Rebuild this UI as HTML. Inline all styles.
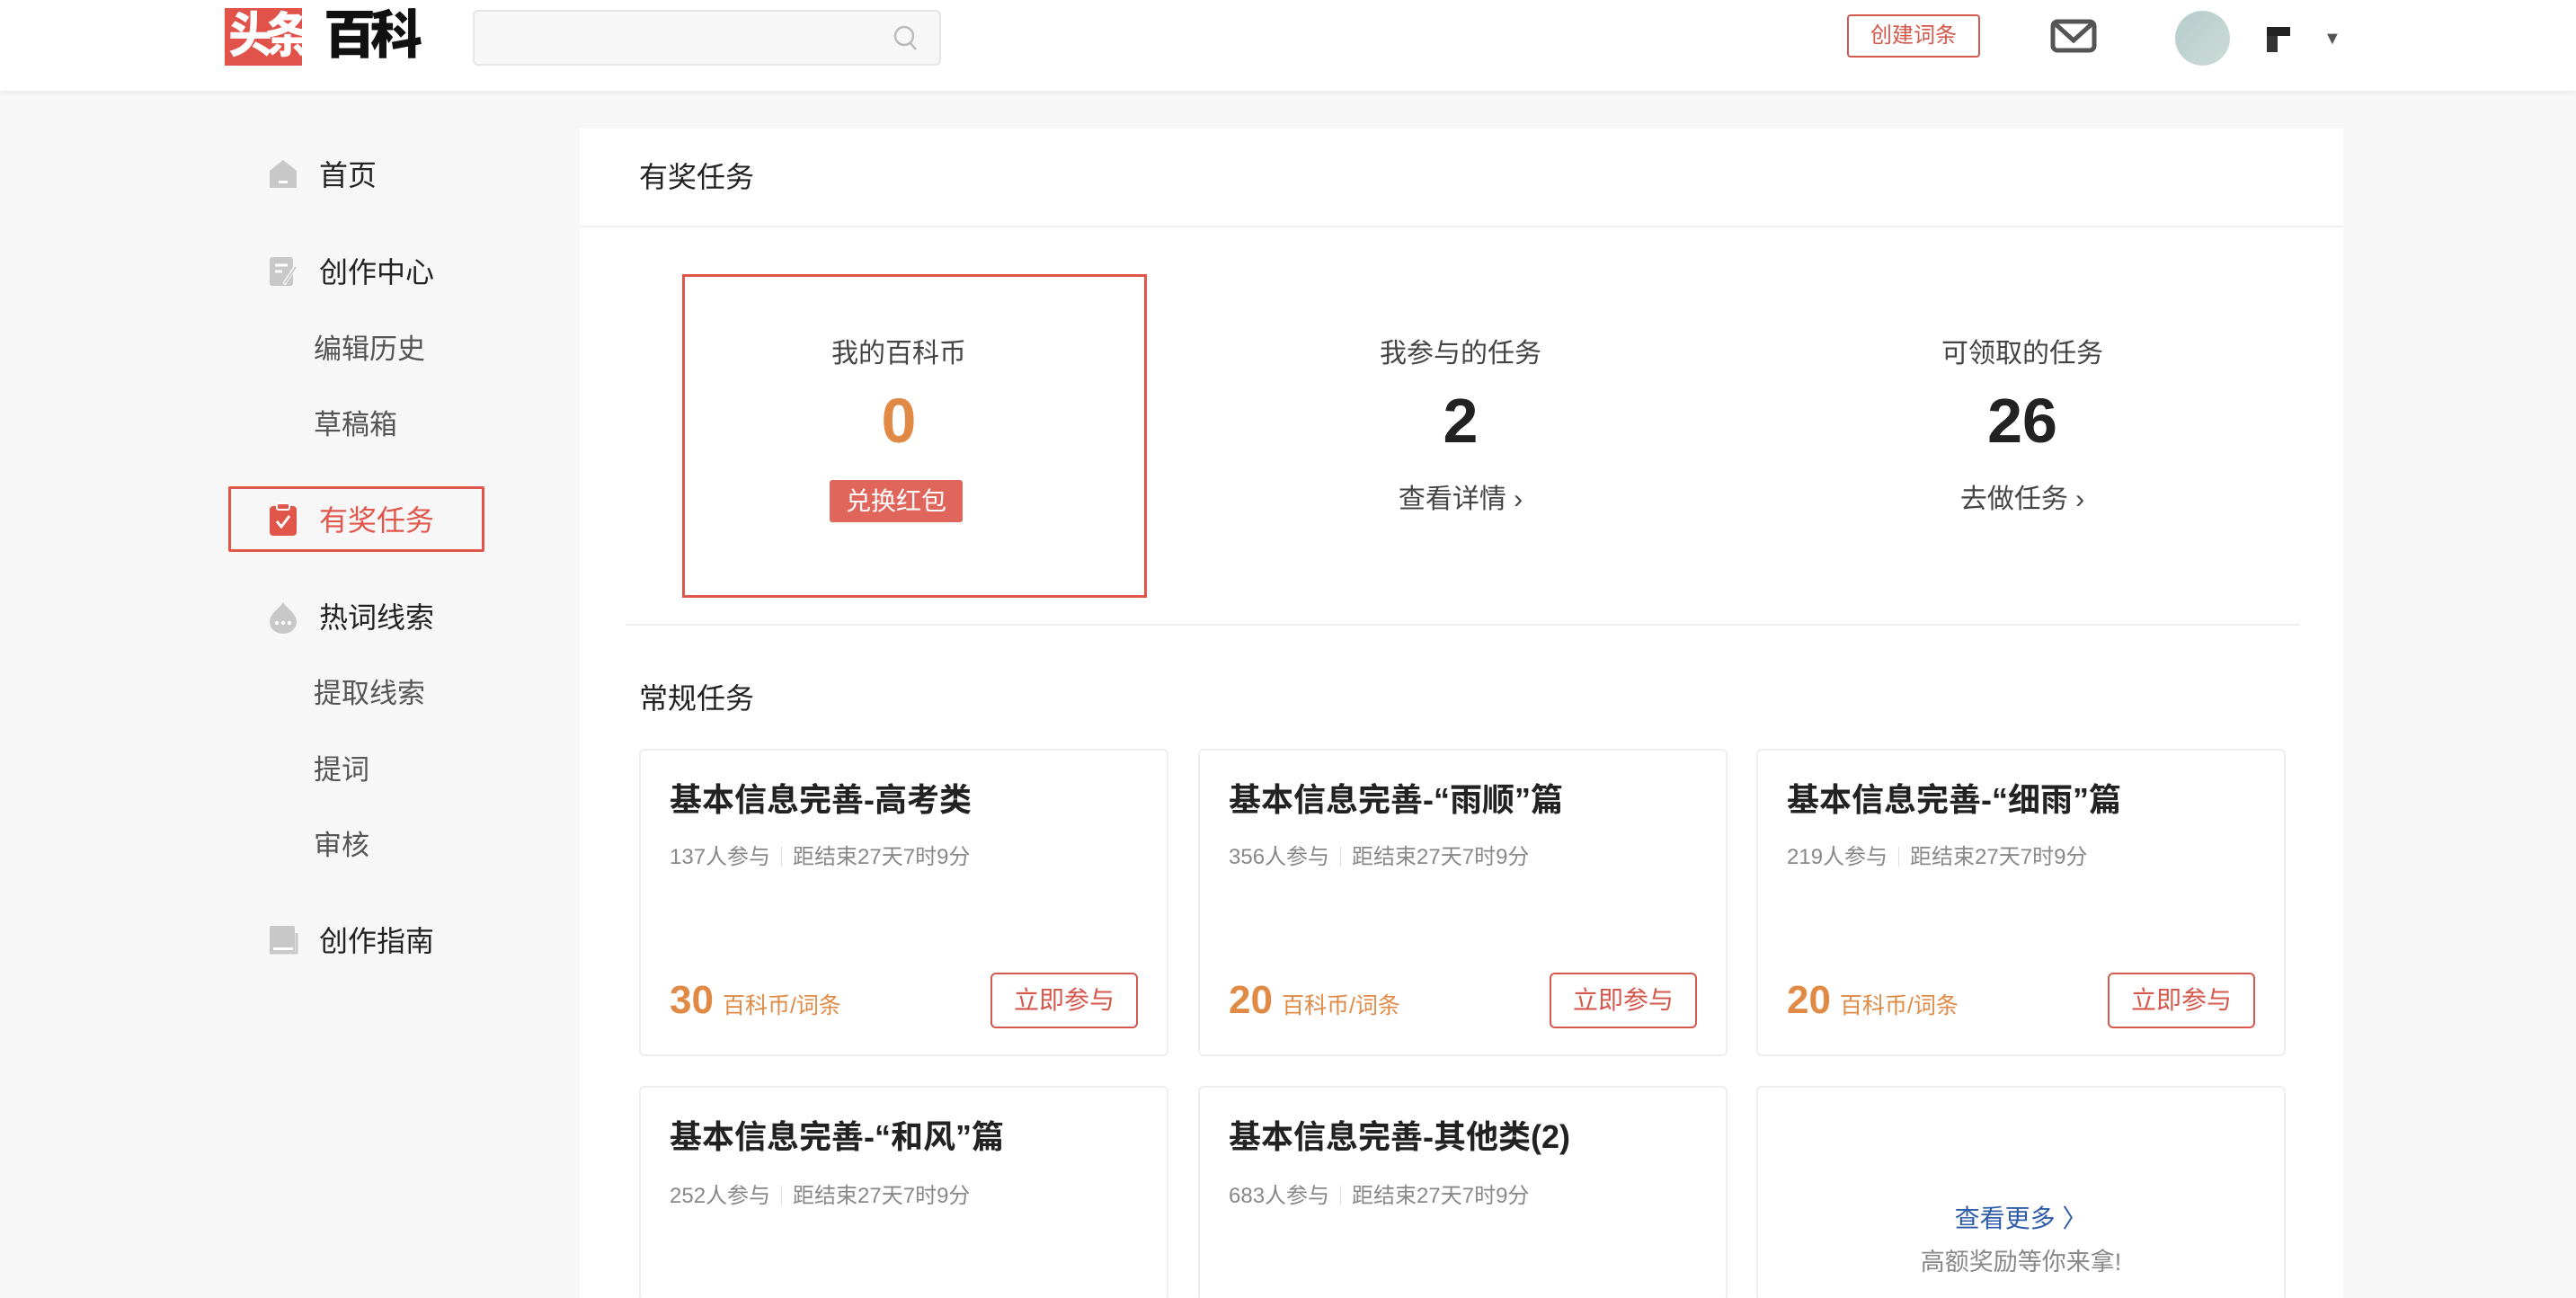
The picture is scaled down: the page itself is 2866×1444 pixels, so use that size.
<!DOCTYPE html>
<html><head><meta charset="utf-8">
<style>
*{margin:0;padding:0;box-sizing:border-box}
html{width:2866px;height:1444px;overflow:hidden}
body{width:2866px;height:1444px;overflow:hidden;background:#f7f7f7;font-family:"Liberation Sans","Noto Sans CJK SC",sans-serif;position:relative;color:#222}
.a{position:absolute;white-space:nowrap}
.hdr{left:0;top:0;width:2866px;height:101px;background:#fff;box-shadow:0 2px 6px rgba(0,0,0,.06)}
.side{font-size:32px;color:#222;line-height:40px}
.sub{font-size:31px;color:#555;line-height:40px}
.panel{left:645px;top:143px;width:1962px;height:1301px;background:#fff}
.lbl{font-size:30px;color:#444;text-align:center;width:500px;line-height:40px}
.num{font-size:70px;color:#222;text-align:center;width:500px;line-height:80px;font-weight:bold}
.lnk{font-size:30px;color:#444;text-align:center;width:500px;line-height:40px}
.card{width:589px;background:#fff;border:2px solid #eeeeee;border-radius:6px}
.ct{font-size:36px;font-weight:bold;color:#222;line-height:44px}
.cm{font-size:24px;color:#888;line-height:30px}
.cm i{display:inline-block;width:1px;height:22px;background:#ddd;margin:0 12px;vertical-align:-3px}
.pts{font-size:44px;font-weight:bold;color:#e08a45;line-height:50px}
.pts span{font-size:25px;font-weight:normal;margin-left:10px}
.btn{width:164px;height:62px;border:2px solid #d5584c;border-radius:6px;color:#d5584c;font-size:28px;text-align:center;line-height:58px}
</style></head><body>
<div class="a hdr"></div>
<div class="a" style="left:250px;top:9px;width:86px;height:64px;background:#e0524a"></div>
<div class="a" style="left:250px;top:6px;width:86px;text-align:center;font-size:54px;font-weight:900;color:#fff;line-height:68px;letter-spacing:-8px;transform:scaleX(0.9)">头条</div>
<div class="a" style="left:360px;top:6px;font-size:58px;font-weight:900;color:#111;line-height:68px;letter-spacing:-6px">百科</div>
<div class="a" style="left:526px;top:11px;width:521px;height:62px;background:#f7f7f7;border:2px solid #e6e6e6;border-radius:6px"></div>
<svg class="a" style="left:992px;top:26px" width="32" height="34" viewBox="0 0 32 34"><circle cx="14" cy="14" r="10" fill="none" stroke="#bbb" stroke-width="2.5"/><line x1="21" y1="22" x2="27" y2="29" stroke="#bbb" stroke-width="2.5"/></svg>
<div class="a" style="left:2055px;top:16px;width:148px;height:48px;border:2px solid #d5584c;border-radius:4px;color:#d5584c;font-size:24px;text-align:center;line-height:44px">创建词条</div>
<svg class="a" style="left:2281px;top:21px" width="52" height="38" viewBox="0 0 52 38"><rect x="3" y="3" width="46" height="32" rx="5" fill="none" stroke="#555" stroke-width="5"/><path d="M5 5 L26 24 L47 5" fill="none" stroke="#555" stroke-width="5"/></svg>
<div class="a" style="left:2420px;top:12px;width:61px;height:61px;border-radius:50%;background:linear-gradient(135deg,#b5cccc,#cddcd6)"></div>
<div class="a" style="left:2522px;top:34px;width:12px;height:24px;background:#333"></div>
<div class="a" style="left:2522px;top:30px;width:26px;height:10px;background:#222"></div>
<div class="a" style="left:2585px;top:32px;font-size:20px;color:#555">▼</div>
<div class="a" style="left:254px;top:541px;width:285px;height:73px;border:3px solid #e0564a;border-radius:2px"></div>
<svg class="a" style="left:298px;top:176px" width="34" height="36" viewBox="0 0 34 36"><path d="M17 2 L32 14 V33 H2 V14 Z" fill="#c8c8c8"/><rect x="12" y="25" width="10" height="3" fill="#fff"/></svg>
<div class="a side" style="left:355px;top:175px">首页</div>
<svg class="a" style="left:298px;top:284px" width="34" height="36" viewBox="0 0 34 36"><rect x="2" y="2" width="26" height="32" rx="3" fill="#c8c8c8"/><path d="M8 11h14M8 18h8" stroke="#fff" stroke-width="3"/><path d="M18 32 L30 14" stroke="#fff" stroke-width="4"/><path d="M19 31 L31 13" stroke="#c8c8c8" stroke-width="2"/></svg>
<div class="a side" style="left:355px;top:283px">创作中心</div>
<div class="a sub" style="left:349px;top:369px">编辑历史</div>
<div class="a sub" style="left:349px;top:453px">草稿箱</div>
<svg class="a" style="left:298px;top:559px" width="34" height="38" viewBox="0 0 34 38"><rect x="2" y="4" width="30" height="33" rx="4" fill="#e0564a"/><rect x="10" y="1" width="14" height="7" rx="2" fill="#e0564a" stroke="#fff" stroke-width="2"/><path d="M10 21 L15 27 L24 15" fill="none" stroke="#fff" stroke-width="3"/></svg>
<div class="a side" style="left:355px;top:559px;color:#e0564a">有奖任务</div>
<svg class="a" style="left:298px;top:668px" width="34" height="38" viewBox="0 0 34 38"><path d="M17 2 C20 8 32 14 32 24 A15 13 0 0 1 2 24 C2 14 14 8 17 2Z" fill="#c8c8c8"/><circle cx="10" cy="25" r="2.2" fill="#fff"/><circle cx="17" cy="25" r="2.2" fill="#fff"/><circle cx="24" cy="25" r="2.2" fill="#fff"/></svg>
<div class="a side" style="left:355px;top:667px">热词线索</div>
<div class="a sub" style="left:349px;top:752px">提取线索</div>
<div class="a sub" style="left:349px;top:837px">提词</div>
<div class="a sub" style="left:349px;top:921px">审核</div>
<svg class="a" style="left:298px;top:1028px" width="34" height="36" viewBox="0 0 34 36"><rect x="2" y="2" width="28" height="30" rx="2" fill="#c8c8c8"/><path d="M2 32 H32 V10" fill="none" stroke="#c8c8c8" stroke-width="3"/><rect x="6" y="26" width="22" height="3" fill="#fff"/></svg>
<div class="a side" style="left:355px;top:1027px">创作指南</div>
<div class="a panel"></div>
<div class="a" style="left:711px;top:177px;font-size:32px;color:#222;line-height:40px">有奖任务</div>
<div class="a" style="left:645px;top:251px;width:1962px;height:2px;background:#f0f0f0"></div>
<div class="a" style="left:759px;top:305px;width:517px;height:360px;border:3px solid #e0564a"></div>
<div class="a lbl" style="left:750px;top:374px">我的百科币</div>
<div class="a num" style="left:750px;top:428px;color:#e08a45">0</div>
<div class="a" style="left:923px;top:534px;width:148px;height:47px;background:#e0665c;border-radius:3px;color:#fff;font-size:28px;text-align:center;line-height:47px">兑换红包</div>
<div class="a lbl" style="left:1375px;top:374px">我参与的任务</div>
<div class="a num" style="left:1375px;top:428px">2</div>
<div class="a lnk" style="left:1375px;top:536px">查看详情 ›</div>
<div class="a lbl" style="left:2000px;top:374px">可领取的任务</div>
<div class="a num" style="left:2000px;top:428px">26</div>
<div class="a lnk" style="left:2000px;top:536px">去做任务 ›</div>
<div class="a" style="left:696px;top:694px;width:1863px;height:2px;background:#eeeeee"></div>
<div class="a" style="left:711px;top:757px;font-size:32px;color:#222;line-height:40px">常规任务</div>
<div class="a card" style="left:711px;top:833px;height:342px"></div>
<div class="a ct" style="left:745px;top:868px">基本信息完善-高考类</div>
<div class="a cm" style="left:745px;top:939px">137人参与<i></i>距结束27天7时9分</div>
<div class="a pts" style="left:745px;top:1088px">30<span>百科币/词条</span></div>
<div class="a btn" style="left:1102px;top:1082px">立即参与</div>
<div class="a card" style="left:1333px;top:833px;height:342px"></div>
<div class="a ct" style="left:1367px;top:868px">基本信息完善-“雨顺”篇</div>
<div class="a cm" style="left:1367px;top:939px">356人参与<i></i>距结束27天7时9分</div>
<div class="a pts" style="left:1367px;top:1088px">20<span>百科币/词条</span></div>
<div class="a btn" style="left:1724px;top:1082px">立即参与</div>
<div class="a card" style="left:1954px;top:833px;height:342px"></div>
<div class="a ct" style="left:1988px;top:868px">基本信息完善-“细雨”篇</div>
<div class="a cm" style="left:1988px;top:939px">219人参与<i></i>距结束27天7时9分</div>
<div class="a pts" style="left:1988px;top:1088px">20<span>百科币/词条</span></div>
<div class="a btn" style="left:2345px;top:1082px">立即参与</div>
<div class="a card" style="left:711px;top:1208px;height:240px"></div>
<div class="a ct" style="left:745px;top:1243px">基本信息完善-“和风”篇</div>
<div class="a cm" style="left:745px;top:1316px">252人参与<i></i>距结束27天7时9分</div>
<div class="a card" style="left:1333px;top:1208px;height:240px"></div>
<div class="a ct" style="left:1367px;top:1243px">基本信息完善-其他类(2)</div>
<div class="a cm" style="left:1367px;top:1316px">683人参与<i></i>距结束27天7时9分</div>
<div class="a card" style="left:1954px;top:1208px;height:240px"></div>
<div class="a" style="left:1954px;top:1337px;width:589px;text-align:center;font-size:28px;color:#2f5ca8;line-height:38px">查看更多 〉</div>
<div class="a" style="left:1954px;top:1385px;width:589px;text-align:center;font-size:27px;color:#888;line-height:38px">高额奖励等你来拿!</div>
</body></html>
